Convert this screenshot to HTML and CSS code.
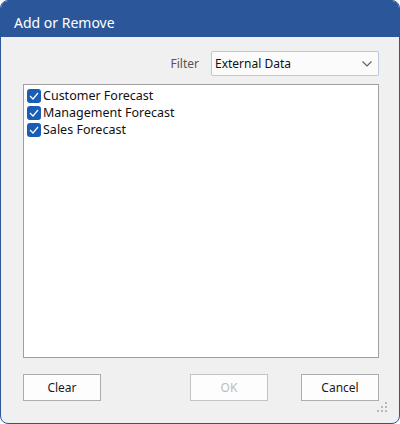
FILE: index.html
```html
<!DOCTYPE html>
<html lang="en">

<head>
  <meta charset="UTF-8">
  <title>Add or Remove</title>
  <link rel="stylesheet" href="styles.css">
</head>

<body>
  <div class="window">
    <div class="titlebar">Add or Remove</div>
    <div class="content">
      <div class="filter-row">
        <label for="filter">Filter</label>
        <div class="select" id="filter">
          <span>External Data</span>
          <svg class="chevron" width="10" height="6" viewBox="0 0 10 6">
            <path d="M0.5 0.5 L5 5 L9.5 0.5" fill="none" stroke="#606060" stroke-width="1.1"/>
          </svg>
        </div>
      </div>
      <div class="listbox">
        <div class="item">
          <span class="check"><svg width="10" height="8" viewBox="0 0 10 8"><path d="M1 4 L4 7 L9 1" fill="none" stroke="#fff" stroke-width="1.2"/></svg></span>
          Customer Forecast
        </div>
        <div class="item">
          <span class="check"><svg width="10" height="8" viewBox="0 0 10 8"><path d="M1 4 L4 7 L9 1" fill="none" stroke="#fff" stroke-width="1.2"/></svg></span>
          Management Forecast
        </div>
        <div class="item">
          <span class="check"><svg width="10" height="8" viewBox="0 0 10 8"><path d="M1 4 L4 7 L9 1" fill="none" stroke="#fff" stroke-width="1.2"/></svg></span>
          Sales Forecast
        </div>
      </div>
      <div class="buttons">
        <button>Clear</button>
        <div class="right-buttons">
          <button disabled>OK</button>
          <button>Cancel</button>
        </div>
      </div>
    </div>
    <!-- resize grip -->
    <svg class="grip" width="11" height="11" viewBox="0 0 11 11">
      <rect x="8" y="0" width="2" height="2" fill="#b8b8b8"/>
      <rect x="4" y="4" width="2" height="2" fill="#b8b8b8"/>
      <rect x="8" y="4" width="2" height="2" fill="#b8b8b8"/>
      <rect x="0" y="8" width="2" height="2" fill="#b8b8b8"/>
      <rect x="4" y="8" width="2" height="2" fill="#b8b8b8"/>
      <rect x="8" y="8" width="2" height="2" fill="#b8b8b8"/>
    </svg>
  </div>
</body>

</html>
```

FILE: styles.css
```css
* {
  margin: 0;
  padding: 0;
  box-sizing: border-box;
  font-family: 'Segoe UI', 'Noto Sans', sans-serif;
}

body {
  background-color: #ffffff;
}

.window {
  position: relative;
  width: 400px;
  height: 424px;
  border: 1px solid #2b579a;
  border-radius: 8px;
  overflow: hidden;
  background-color: #f0f0f0;
}

.titlebar {
  height: 36px;
  background-color: #2b579a;
  color: #ffffff;
  font-size: 14px;
  line-height: 28px;
  padding: 8px 0 0 13px;
}

.content {
  padding: 14px 20px 0 22px;
}

.filter-row {
  display: flex;
  justify-content: flex-end;
  align-items: center;
  gap: 12px;
}

.filter-row label {
  font-size: 12px;
  color: #555555;
}

.select {
  width: 168px;
  height: 25px;
  border: 1px solid #b9c9de;
  border-radius: 2px;
  background-color: #fbfbfb;
  display: flex;
  align-items: center;
  justify-content: space-between;
  padding: 0 6px 0 3px;
  font-size: 12px;
  color: #111111;
}

.listbox {
  margin-top: 8px;
  height: 274px;
  border: 1px solid #a0a0a0;
  background-color: #ffffff;
  padding: 2px 3px;
}

.item {
  display: flex;
  align-items: center;
  height: 17px;
  font-size: 12.5px;
  color: #111111;
  gap: 2px;
}

.check {
  width: 14px;
  height: 14px;
  border-radius: 3px;
  background-color: #1a5db4;
  display: flex;
  align-items: center;
  justify-content: center;
}

.buttons {
  margin-top: 16px;
  display: flex;
  justify-content: space-between;
}

.right-buttons {
  display: flex;
  gap: 33px;
}

button {
  width: 78px;
  height: 27px;
  border: 1px solid #adadad;
  background-color: #fdfdfd;
  font-size: 12px;
  color: #1a1a1a;
}

button:disabled {
  color: #bcbcbc;
  border-color: #c4c4c4;
}

.grip {
  position: absolute;
  right: 11px;
  bottom: 10px;
}
```
